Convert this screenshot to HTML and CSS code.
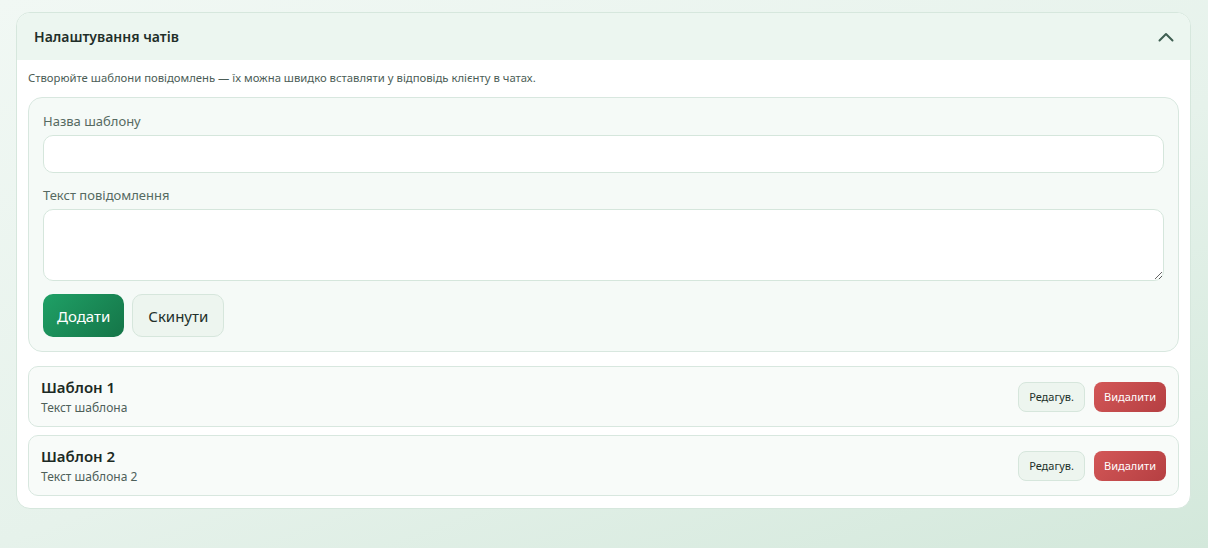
FILE: index.html
```html
<!DOCTYPE html>
<html lang="uk">
<head>
    <meta charset="UTF-8">
    <meta name="viewport" content="width=device-width, initial-scale=1.0">
    <title>Налаштування чатів</title>
    <link rel="stylesheet" href="styles.css">
</head>
<body>
    <section class="panel">
        <header class="panel-head">
            <h2>Налаштування чатів</h2>
            <button class="toggle" aria-label="Згорнути">
                <svg width="16" height="10" viewBox="0 0 16 10"><path d="M1.5 8.5 L8 2 L14.5 8.5" fill="none" stroke="#3f5f52" stroke-width="2" stroke-linecap="round" stroke-linejoin="round"/></svg>
            </button>
        </header>
        <div class="panel-body">
            <p class="hint">Створюйте шаблони повідомлень — їх можна швидко вставляти у відповідь клієнту в чатах.</p>

            <form class="tpl-form">
                <label class="field">
                    <span>Назва шаблону</span>
                    <input type="text">
                </label>
                <label class="field">
                    <span>Текст повідомлення</span>
                    <textarea rows="3"></textarea>
                </label>
                <div class="actions">
                    <button type="button" class="btn btn-primary">Додати</button>
                    <button type="reset" class="btn btn-ghost">Скинути</button>
                </div>
            </form>

            <div class="tpl-list">
                <div class="tpl-item">
                    <div class="tpl-info">
                        <div class="tpl-name">Шаблон 1</div>
                        <div class="tpl-text">Текст шаблона</div>
                    </div>
                    <div class="tpl-actions">
                        <button class="btn-sm btn-edit">Редагув.</button>
                        <button class="btn-sm btn-del">Видалити</button>
                    </div>
                </div>
                <div class="tpl-item">
                    <div class="tpl-info">
                        <div class="tpl-name">Шаблон 2</div>
                        <div class="tpl-text">Текст шаблона 2</div>
                    </div>
                    <div class="tpl-actions">
                        <button class="btn-sm btn-edit">Редагув.</button>
                        <button class="btn-sm btn-del">Видалити</button>
                    </div>
                </div>
            </div>
        </div>
    </section>
</body>
</html>
```

FILE: styles.css
```css
html {
    height: 100%;
}
body {
    margin: 0;
    min-height: 100%;
    padding: 12px 17px 40px 16px;
    box-sizing: border-box;
    font-family: 'Segoe UI', 'Noto Sans', sans-serif;
    color: #1f2d27;
    background: linear-gradient(160deg, #f1f8f4 0%, #e6f2eb 55%, #d3e8db 100%);
}
.panel {
    background: #fff;
    border: 1px solid #d6e7dd;
    border-radius: 14px;
    overflow: hidden;
}
.panel-head {
    display: flex;
    align-items: center;
    justify-content: space-between;
    height: 47px;
    padding: 0 16px 0 17px;
    background: #ecf6f0;
}
.panel-head h2 {
    margin: 0;
    font-size: 14px;
    font-weight: 600;
    color: #1f2f29;
}
.toggle {
    border: 0;
    background: none;
    padding: 0;
    display: flex;
    cursor: pointer;
}
.panel-body {
    padding: 9px 11px 12px 11px;
}
.hint {
    margin: 0 0 10px;
    font-size: 11.3px;
    color: #4b5d56;
    line-height: 18px;
}
.tpl-form {
    background: #f5faf7;
    border: 1px solid #d8e7df;
    border-radius: 14px;
    padding: 14px 14px 14px;
}
.field {
    display: flex;
    flex-direction: column;
    gap: 5px;
    margin-bottom: 13px;
}
.field span {
    font-size: 13px;
    color: #566a62;
    line-height: 18px;
}
.field input,
.field textarea {
    border: 1px solid #d5e6dc;
    border-radius: 10px;
    background: #fff;
    font-family: inherit;
    font-size: 14px;
    box-sizing: border-box;
}
.field input {
    height: 38px;
}
.field textarea {
    height: 72px;
    resize: vertical;
}
.actions {
    display: flex;
    gap: 8px;
}
.btn {
    height: 43px;
    padding: 0 14px;
    border-radius: 10px;
    font-family: inherit;
    font-size: 15px;
    cursor: pointer;
}
.btn-primary {
    border: 0;
    color: #fff;
    background: linear-gradient(135deg, #1fa066 0%, #157548 100%);
}
.btn-ghost {
    border: 1px solid #d6e6dc;
    background: #edf5ef;
    color: #22312b;
    padding: 0 15px;
}
.tpl-list {
    display: flex;
    flex-direction: column;
    gap: 8px;
    margin-top: 14px;
}
.tpl-item {
    display: flex;
    align-items: center;
    justify-content: space-between;
    height: 61px;
    box-sizing: border-box;
    padding: 0 12px;
    background: #f8fbf9;
    border: 1px solid #d8e7df;
    border-radius: 10px;
}
.tpl-name {
    font-size: 15px;
    font-weight: 600;
    color: #1c2a24;
    line-height: 20px;
}
.tpl-text {
    margin-top: 2px;
    font-size: 12px;
    color: #4e605a;
    line-height: 18px;
}
.tpl-actions {
    display: flex;
    gap: 9px;
}
.btn-sm {
    height: 30px;
    padding: 0 10px;
    border-radius: 8px;
    font-family: inherit;
    font-size: 11px;
    cursor: pointer;
}
.btn-edit {
    border: 1px solid #d6e6dc;
    background: #edf5ef;
    color: #21302a;
}
.btn-del {
    border: 0;
    color: #fff;
    background: linear-gradient(135deg, #d35757 0%, #b53f42 100%);
}
```
